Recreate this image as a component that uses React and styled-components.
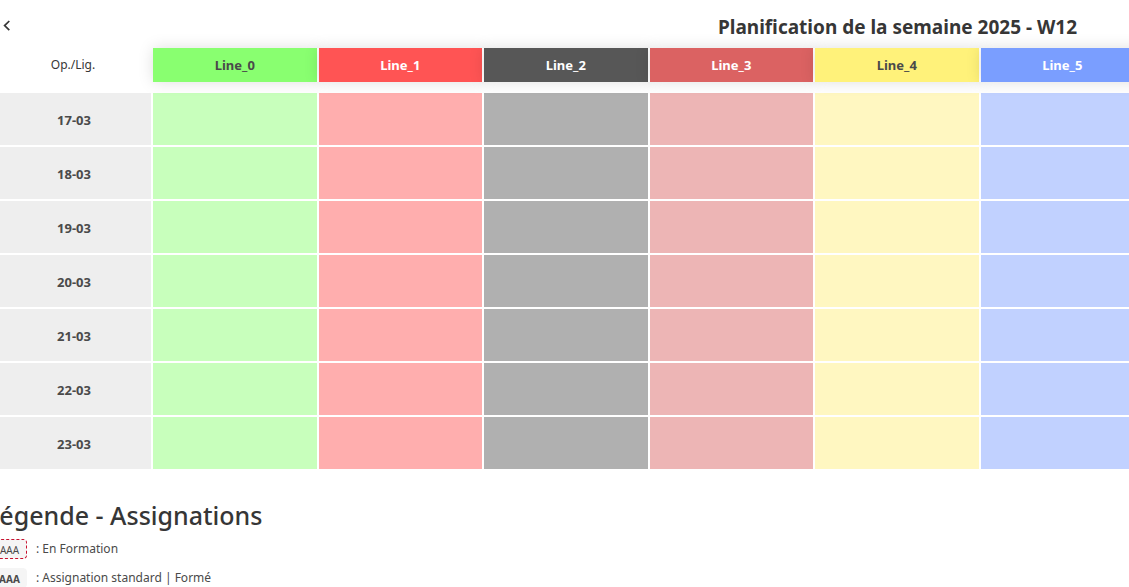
import React from "react";
import styled, { createGlobalStyle } from "styled-components";

const GlobalStyle = createGlobalStyle`
  *, *::before, *::after { box-sizing: border-box; }
  html { overflow: hidden; background: #fff; }
  body {
    margin: 0;
    color: #4a4a4a;
    font-family: "Segoe UI", "Noto Sans", "Open Sans", sans-serif;
    font-size: 12px;
    line-height: 20px;
  }
`;

const Page = styled.main`
  overflow: hidden;
  padding-bottom: 12px;
`;

const TopBar = styled.header`
  display: flex;
  align-items: center;
  height: 48px;
  padding-top: 5px;
`;

const BackButton = styled.button`
  flex: none;
  display: flex;
  width: 12px;
  height: 20px;
  margin-right: -12px;
  padding: 2px 0 0 2px;
  border: 0;
  background: none;
  color: #363636;
  cursor: pointer;
`;

const Title = styled.h1`
  flex: none;
  width: 159%;
  margin: 0;
  color: #363636;
  font-size: 19px;
  font-weight: 700;
  line-height: 24px;
  text-align: center;
`;

const Schedule = styled.table`
  width: calc(100% + 20px);
  margin-left: -3px;
  table-layout: fixed;
  border-collapse: separate;
  border-spacing: 0;
  text-align: center;
`;

const CornerCell = styled.th`
  width: 156px;
  height: 34px;
  padding: 0 4px 0 0;
  color: #363636;
  font-weight: 400;
`;

const LineHead = styled.th`
  position: relative;
  padding: 0;
  border-right: 2px solid #fff;
  background: ${(p) => p.$tone};
  box-shadow: 0 0 16px rgba(10, 10, 10, 0.13);
  color: ${(p) => (p.$dark ? "#4a4a4a" : "#fff")};
  font-size: 13px;
  font-weight: 700;
`;

const Days = styled.tbody`
  &::before {
    content: "";
    display: table-row;
    height: 11px;
  }
`;

const DayHead = styled.th`
  height: 54px;
  padding: 2px 0 0;
  border-right: 2px solid #fff;
  border-bottom: 2px solid #fff;
  background: #eee;
  background-clip: padding-box;
  font-size: 13px;
  font-weight: 700;
`;

const Slot = styled.td`
  padding: 0;
  border-right: 2px solid #fff;
  border-bottom: 2px solid #fff;
  background: ${(p) => p.$tone};
  background-clip: padding-box;
`;

const Legend = styled.section`
  margin: 26px 0 0 -14px;
`;

const LegendTitle = styled.h2`
  margin: 0 0 6px;
  color: #363636;
  font-size: 25px;
  font-weight: 500;
  line-height: 36px;
`;

const LegendRow = styled.p`
  display: flex;
  align-items: center;
  gap: 9px;
  height: 20px;
  margin: 0 0 9px 6px;
`;

const Badge = styled.span`
  width: 35px;
  height: 20px;
  border: 1px ${(p) => (p.$training ? "dashed #c8102e" : "solid #f5f5f5")};
  border-radius: 4px;
  background: #f5f5f5;
  font-size: 10px;
  font-weight: ${(p) => (p.$training ? 400 : 700)};
  line-height: 20px;
  text-align: center;
`;

const lines = [
  { name: "Line_0", head: "#89ff70", slot: "#c8ffbc", dark: true },
  { name: "Line_1", head: "#ff5454", slot: "#ffaeae" },
  { name: "Line_2", head: "#575757", slot: "#b0b0b0" },
  { name: "Line_3", head: "#db6262", slot: "#edb5b5" },
  { name: "Line_4", head: "#fff27a", slot: "#fff7c1", dark: true },
  { name: "Line_5", head: "#7a9eff", slot: "#c1d1ff" },
];

const days = ["17-03", "18-03", "19-03", "20-03", "21-03", "22-03", "23-03"];

export default function App() {
  return (
    <>
      <GlobalStyle />
      <Page>
        <TopBar>
          <BackButton type="button" aria-label="Semaine précédente">
            <svg width="10" height="14" viewBox="0 0 10 14" fill="none" stroke="currentColor" strokeWidth="1.7">
              <path d="M7.3 2 L2.6 6.6 L7.3 11.2" />
            </svg>
          </BackButton>
          <Title>Planification de la semaine 2025 - W12</Title>
        </TopBar>
        <Schedule>
          <thead>
            <tr>
              <CornerCell scope="col">Op./Lig.</CornerCell>
              {lines.map((l) => (
                <LineHead key={l.name} scope="col" $tone={l.head} $dark={l.dark}>
                  {l.name}
                </LineHead>
              ))}
            </tr>
          </thead>
          <Days>
            {days.map((day) => (
              <tr key={day}>
                <DayHead scope="row">{day}</DayHead>
                {lines.map((l) => (
                  <Slot key={l.name} $tone={l.slot} />
                ))}
              </tr>
            ))}
          </Days>
        </Schedule>
        <Legend>
          <LegendTitle>Légende - Assignations</LegendTitle>
          <LegendRow>
            <Badge $training>AAA</Badge>: En Formation
          </LegendRow>
          <LegendRow>
            <Badge>AAA</Badge>: Assignation standard | Formé
          </LegendRow>
        </Legend>
      </Page>
    </>
  );
}
